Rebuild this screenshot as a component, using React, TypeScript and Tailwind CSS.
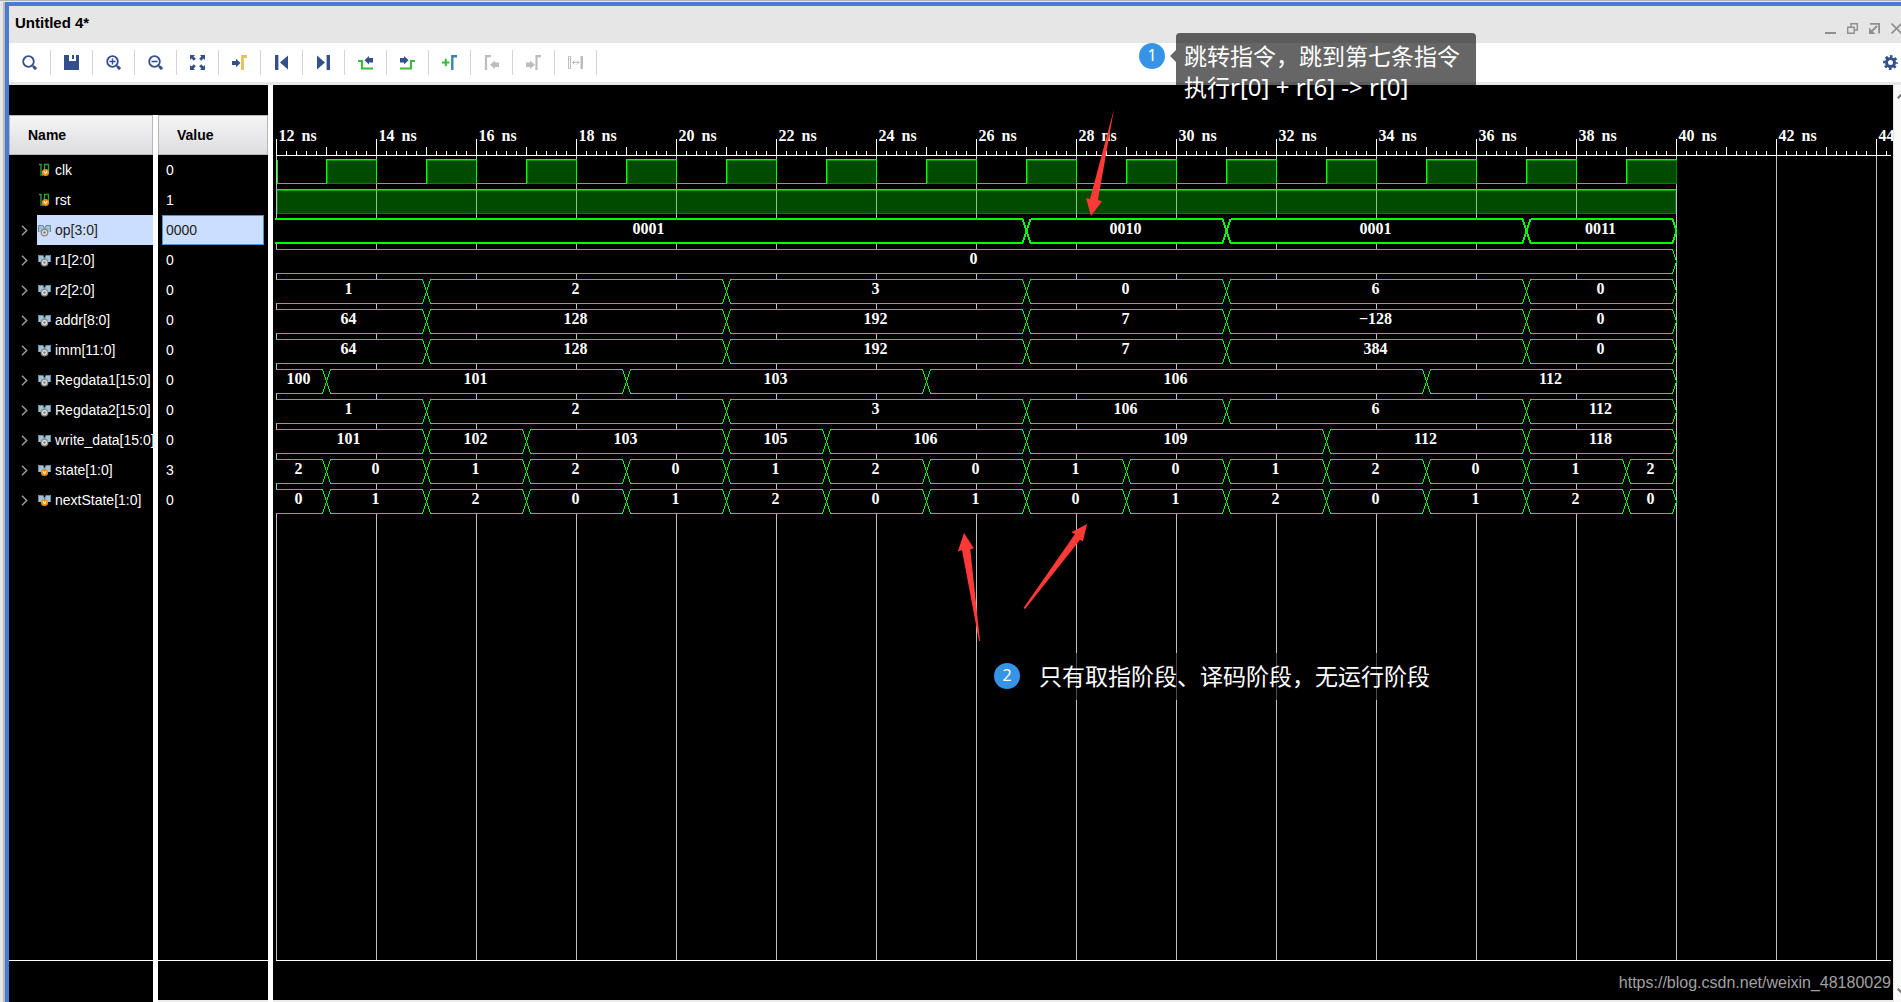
import type { ReactNode } from 'react';

type Segment = [start: number, label: string];

type Signal = {
  name: string;
  value: string;
  kind: 'clock' | 'level' | 'bus';
  internal?: boolean;
  segments?: Segment[];
};

const T_START = 12;
const T_END = 40;
const T_LAST = 44;
const PX_PER_NS = 50;
const ROW = 30;
const AXIS_Y = 70;

const SIGNALS: Signal[] = [
  { name: 'clk', value: '0', kind: 'clock', internal: true },
  { name: 'rst', value: '1', kind: 'level', internal: true },
  { name: 'op[3:0]', value: '0000', kind: 'bus', segments: [[12, '0001'], [27, '0010'], [31, '0001'], [37, '0011']] },
  { name: 'r1[2:0]', value: '0', kind: 'bus', segments: [[12, '0']] },
  { name: 'r2[2:0]', value: '0', kind: 'bus', segments: [[12, '1'], [15, '2'], [21, '3'], [27, '0'], [31, '6'], [37, '0']] },
  { name: 'addr[8:0]', value: '0', kind: 'bus', segments: [[12, '64'], [15, '128'], [21, '192'], [27, '7'], [31, '−128'], [37, '0']] },
  { name: 'imm[11:0]', value: '0', kind: 'bus', segments: [[12, '64'], [15, '128'], [21, '192'], [27, '7'], [31, '384'], [37, '0']] },
  { name: 'Regdata1[15:0]', value: '0', kind: 'bus', segments: [[12, '100'], [13, '101'], [19, '103'], [25, '106'], [35, '112']] },
  { name: 'Regdata2[15:0]', value: '0', kind: 'bus', segments: [[12, '1'], [15, '2'], [21, '3'], [27, '106'], [31, '6'], [37, '112']] },
  {
    name: 'write_data[15:0]', value: '0', kind: 'bus',
    segments: [[12, '101'], [15, '102'], [17, '103'], [21, '105'], [23, '106'], [27, '109'], [33, '112'], [37, '118']],
  },
  {
    name: 'state[1:0]', value: '3', kind: 'bus', internal: true,
    segments: [
      [12, '2'], [13, '0'], [15, '1'], [17, '2'], [19, '0'], [21, '1'], [23, '2'], [25, '0'],
      [27, '1'], [29, '0'], [31, '1'], [33, '2'], [35, '0'], [37, '1'], [39, '2'],
    ],
  },
  {
    name: 'nextState[1:0]', value: '0', kind: 'bus', internal: true,
    segments: [
      [12, '0'], [13, '1'], [15, '2'], [17, '0'], [19, '1'], [21, '2'], [23, '0'], [25, '1'],
      [27, '0'], [29, '1'], [31, '2'], [33, '0'], [35, '1'], [37, '2'], [39, '0'],
    ],
  },
];

const SELECTED = 'op[3:0]';

const NAVY = '#34508a';
const GREEN = '#3fb83f';
const GREY = '#bdbdbd';

const xOf = (t: number) => (t - T_START) * PX_PER_NS + 0.5;

function Icon({ children, size = 15 }: { children: ReactNode; size?: number }) {
  return (
    <svg width={size} height={size} viewBox={`0 0 ${size} ${size}`} fill="none" className="shrink-0">
      {children}
    </svg>
  );
}

function Lens({ children }: { children?: ReactNode }) {
  return (
    <Icon>
      <circle cx="6.5" cy="6.5" r="5.3" stroke={NAVY} strokeWidth="1.8" />
      <path d="M10.5 10.5l1.5 1.5" stroke={NAVY} strokeWidth="1.6" />
      <path d="M11.5 11.5l2.6 2.6" stroke={NAVY} strokeWidth="3" />
      {children}
    </Icon>
  );
}

const TOOLS: { label: string; icon: ReactNode; disabled?: boolean }[] = [
  { label: 'Find', icon: <Lens /> },
  {
    label: 'Save',
    icon: <Icon><path d="M0 0h5v6h7V0h3v15H0zM8 0h2v4H8z" fill={NAVY} /></Icon>,
  },
  { label: 'Zoom in', icon: <Lens><path d="M3.5 6.5h6M6.5 3.5v6" stroke={NAVY} strokeWidth="1.4" /></Lens> },
  { label: 'Zoom out', icon: <Lens><path d="M3.5 6.5h6" stroke={NAVY} strokeWidth="1.6" /></Lens> },
  {
    label: 'Zoom fit',
    icon: (
      <Icon>
        <path d="M0 0h5L3.6 1.5l2.2 2.2-2 2-2.200-2.200L0 5zM15 0v5l-1.600-1.500-2.200 2.200-2-2 2.200-2.200L10 0zM0 15v-5l1.600 1.500 2.200-2.200 2 2-2.200 2.200L5 15zM15 15h-5l1.400-1.500-2.200-2.200 2-2 2.200 2.200L15 10z" fill={NAVY} />
      </Icon>
    ),
  },
  {
    label: 'Go to cursor',
    icon: (
      <Icon>
        <path d="M0 6h4V3.8L8.5 8 4 12.2V10H0z" fill={NAVY} />
        <path d="M10.500 15V1.500H15" stroke="#e3c65b" strokeWidth="3" />
      </Icon>
    ),
  },
  { label: 'Go to start', icon: <Icon><path d="M1 0h3.400v15H1zM14 .5v14L6 7.500z" fill={NAVY} /></Icon> },
  { label: 'Go to end', icon: <Icon><path d="M10.600 0H14v15h-3.400zM1 .5v14l8-7z" fill={NAVY} /></Icon> },
  {
    label: 'Previous transition',
    icon: (
      <Icon>
        <path d="M0 6h4v7.500h11" stroke={GREEN} strokeWidth="2.200" />
        <path d="M15 3v4.500h-4v2L6.500 5.200 11 1v2z" fill={NAVY} />
      </Icon>
    ),
  },
  {
    label: 'Next transition',
    icon: (
      <Icon>
        <path d="M0 13.500h11V6h4" stroke={GREEN} strokeWidth="2.200" />
        <path d="M0 3v4.500h4v2l4.500-4.300L4 1v2z" fill={NAVY} />
      </Icon>
    ),
  },
  {
    label: 'Add marker',
    icon: (
      <Icon>
        <path d="M0 7.500h7.500M3.800 3.800v7.500" stroke={GREEN} strokeWidth="2" />
        <path d="M10.300 15V1.200H15" stroke="#3c82b4" strokeWidth="2.400" />
      </Icon>
    ),
  },
  {
    label: 'Previous marker',
    disabled: true,
    icon: (
      <Icon>
        <path d="M2 15V1.200h5" stroke={GREY} strokeWidth="2.200" />
        <path d="M15 7.500v4.500h-4v2L6 9.700l5-4.200v2z" fill={GREY} />
      </Icon>
    ),
  },
  {
    label: 'Next marker',
    disabled: true,
    icon: (
      <Icon>
        <path d="M10.500 15V1.200H15" stroke={GREY} strokeWidth="2.200" />
        <path d="M0 7.500v4.500h4v2l5-4.300-5-4.200v2z" fill={GREY} />
      </Icon>
    ),
  },
  {
    label: 'Swap cursors',
    disabled: true,
    icon: (
      <Icon>
        <path d="M.5 1.500h2v12h-2z" stroke={GREY} />
        <path d="M12.500 1H15v13h-2.500z" fill={GREY} />
        <path d="M4.500 7.500h6.500M6.500 5.500l-2 2 2 2M9 5.500l2 2-2 2" stroke={GREY} />
      </Icon>
    ),
  },
];

function SignalIcon({ signal }: { signal: Signal }) {
  return (
    <svg width="13" height="14" viewBox="0 0 13 14" fill="none" className="shrink-0">
      {signal.kind === 'bus' ? (
        <>
          <path d="M0 2h5l1.500 3L8 2h5v7H0z" fill="#9cc4da" />
          <path d="M.5 9V2.500H5L6.500 6 8 2.500h4.500V9" stroke="#6f8694" />
        </>
      ) : (
        <path d="M1 1.500h2V12h2M6.500 8V1.500h4V8" stroke="#2f9a3f" strokeWidth="1.400" />
      )}
      {signal.internal ? (
        <>
          <circle cx={signal.kind === 'bus' ? 6.5 : 7.5} cy="9.500" r="3.600" fill="#ef8f1f" />
          <path d={signal.kind === 'bus' ? 'M5 8l1.500 3L8 8' : 'M6 8l1.500 3L9 8'} stroke="#fff" />
        </>
      ) : (
        <>
          <circle cx="6.500" cy="9.500" r="3.200" fill="#e8e8e8" stroke="#8c8c8c" strokeWidth="1.400" />
          <circle cx="6.500" cy="9.500" r="1.200" fill="#777" />
        </>
      )}
    </svg>
  );
}

function SignalTable() {
  return (
    <section className="flex w-[259px] shrink-0 flex-col bg-black">
      <table className="mt-[30px] w-full table-fixed border-separate border-spacing-0 text-sm">
        <colgroup>
          <col className="w-[149px]" />
          <col />
        </colgroup>
        <thead>
          <tr className="h-10 text-left text-black">
            <th className="border-r-[5px] border-white p-0">
              <div className="flex h-10 items-center border border-[#b8b8b8] bg-linear-to-b from-[#f5f5f5] to-[#dddde1] pl-[18px]">Name</div>
            </th>
            <th className="p-0">
              <div className="flex h-10 items-center border border-[#b8b8b8] bg-linear-to-b from-[#f5f5f5] to-[#dddde1] pl-[18px]">Value</div>
            </th>
          </tr>
        </thead>
        <tbody>
          {SIGNALS.map(s => {
            const selected = s.name === SELECTED;
            return (
              <tr key={s.name} className="h-[30px] text-white">
                <td className="overflow-hidden border-r-[5px] border-white p-0">
                  <div className="flex h-[30px] items-center">
                    <div className="flex w-7 shrink-0 justify-center pt-px pl-[3px]">
                      {s.kind === 'bus' && (
                        <button aria-label={`Expand ${s.name}`} className="flex">
                          <svg width="7" height="11" viewBox="0 0 7 11" fill="none" stroke="#9a9a9a" strokeWidth="1.500">
                            <path d="M1 .8l4.700 4.700L1 10.200" />
                          </svg>
                        </button>
                      )}
                    </div>
                    <div className={`flex h-full min-w-0 flex-1 items-center gap-1 overflow-hidden whitespace-nowrap pl-px ${selected ? 'bg-[#cbdeff] text-[#222]' : ''}`}>
                      <SignalIcon signal={s} />
                      {s.name}
                    </div>
                  </div>
                </td>
                <td className="px-1 py-0">
                  <div className={`flex h-[30px] items-center border pl-[3px] ${selected ? 'border-[#4a94d0] bg-[#cbdeff] text-[#222]' : 'border-transparent'}`}>
                    {s.value}
                  </div>
                </td>
              </tr>
            );
          })}
        </tbody>
      </table>
      <div className="flex flex-1">
        <div className="w-36" />
        <div className="w-[5px] bg-white" />
      </div>
      <div className="flex h-[42px]">
        <div className="w-36 border-t border-white" />
        <div className="w-[5px] bg-white" />
        <div className="flex-1 border-t border-b-2 border-t-white border-b-[#ececec]" />
      </div>
    </section>
  );
}

function Ruler() {
  const ticks: ReactNode[] = [];
  // five minor ticks per nanosecond, plus one past the last label
  for (let i = 0; i <= (T_LAST - T_START) * 5 + 1; i++) {
    const x = i * 10 + 0.5;
    const height = i % 10 === 0 ? 16 : i % 5 === 0 ? 8 : 4;
    ticks.push(<path key={i} d={`M${x} ${AXIS_Y - height}V${AXIS_Y}`} />);
  }
  const labels: number[] = [];
  for (let t = T_START; t <= T_LAST; t += 2) labels.push(t);

  return (
    <>
      <g stroke="#fff">{ticks}</g>
      <rect x="0" y={AXIS_Y} width="100%" height="1" fill="#fff" />
      <g fill="#fff">
        {labels.map(t => (
          <g key={t}>
            <text x={xOf(t) + 2} y={AXIS_Y - 14}>{t}</text>
            {t < T_LAST && <text x={xOf(t) + 25} y={AXIS_Y - 14}>ns</text>}
          </g>
        ))}
      </g>
    </>
  );
}

function ClockWave({ top }: { top: number }) {
  const y0 = top + 4.5;
  const y1 = top + 28.5;
  const highs: number[] = [];
  for (let t = T_START + 1; t < T_END; t += 2) highs.push(t);
  return (
    <g>
      <path d={`M1.500 ${y0}V${y1}`} stroke="#00ff00" />
      {highs.map(t => (
        <g key={t}>
          <path d={`M${xOf(t - 1)} ${y1}H${xOf(t)}`} stroke="#00ff00" />
          <rect x={xOf(t)} y={y0} width={PX_PER_NS} height="24" fill="#004b00" stroke="#008000" />
          <path d={`M${xOf(t) + 1} ${y1 - 1}V${y0 + 1}H${xOf(t + 1)}`} stroke="#009600" />
          <path d={`M${xOf(t)} ${y1}V${y0}H${xOf(t + 1)}${t + 1 < T_END ? `V${y1}` : ''}`} stroke="#00ff00" />
        </g>
      ))}
    </g>
  );
}

function LevelWave({ top }: { top: number }) {
  const width = (T_END - T_START) * PX_PER_NS;
  const grid: number[] = [];
  for (let t = T_START + 2; t < T_END; t += 2) grid.push(t);
  return (
    <g>
      <rect x="1.500" y={top + 4.5} width={width - 2} height="24" fill="#004b00" stroke="#008000" />
      <path d={`M1 ${top + 5.5}H${width}`} stroke="#00a800" />
      {grid.map(t => <path key={t} d={`M${xOf(t)} ${top + 5}v24`} stroke="#80c880" />)}
      <path d={`M0 ${top + 4.5}H${width + 1}`} stroke="#00ff00" />
    </g>
  );
}

function BusWave({ top, segments, selected }: { top: number; segments: Segment[]; selected: boolean }) {
  const y0 = selected ? top + 4 : top + 4.5;
  const y1 = selected ? top + 28 : top + 28.5;
  const mid = (y0 + y1) / 2;
  return (
    <g>
      {segments.map(([t, label], i) => {
        const a = xOf(t);
        const b = xOf(i + 1 < segments.length ? segments[i + 1][0] : T_END);
        const left = i === 0 ? '' : `L${a} ${mid}L${a + 4} ${y0}`;
        const from = i === 0 ? (selected ? a - 1.5 : a - 0.5) : a + 4;
        return (
          <g key={t}>
            <path
              d={`M${from} ${y0}H${b - 4}L${b} ${mid}L${b - 4} ${y1}H${from}${left}`}
              fill="#000"
              stroke="#00ff00"
              strokeWidth={selected ? 2 : 1}
            />
            <text x={(i === 0 ? a - 4 + b : a + b) / 2 - 1} y={top + 19} textAnchor="middle" fill="#fff">{label}</text>
          </g>
        );
      })}
    </g>
  );
}

function WavePanel() {
  const grid: number[] = [];
  for (let t = T_START; t <= T_LAST; t += 2) grid.push(t);
  return (
    <section className="flex min-w-0 flex-1 flex-col overflow-hidden border-b-2 border-[#ececec] bg-black">
      <div className="mr-[2px] ml-[3px] flex min-h-[440px] flex-1 border-b border-white">
        <svg
          width="100%"
          height="100%"
          shapeRendering="crispEdges"
          fill="none"
          className="overflow-visible font-['Liberation_Serif',serif] text-base font-bold"
        >
          {grid.map(t => (
            <line key={t} x1={xOf(t)} x2={xOf(t)} y1={AXIS_Y + 1} y2="100%" stroke="#c0c0c0" />
          ))}
          <Ruler />
          {SIGNALS.map((s, i) => {
            const top = AXIS_Y + i * ROW;
            if (s.kind === 'clock') return <ClockWave key={s.name} top={top} />;
            if (s.kind === 'level') return <LevelWave key={s.name} top={top} />;
            return <BusWave key={s.name} top={top} segments={s.segments ?? []} selected={s.name === SELECTED} />;
          })}
        </svg>
      </div>
      <div className="flex h-[39px] items-center justify-end pt-1 pr-[2px]">
        <a href="https://blog.csdn.net/weixin_48180029" className="text-base text-[#a0a0a0]">
          https://blog.csdn.net/weixin_48180029
        </a>
      </div>
    </section>
  );
}

function Badge({ children }: { children: ReactNode }) {
  return (
    <span className="flex size-[26px] shrink-0 justify-center rounded-full bg-[#3793e6] text-base leading-6 text-white">
      {children}
    </span>
  );
}

// Notes pinned on top of the waveform window
function Annotations() {
  return (
    <div className="pointer-events-none font-['Noto_Sans','Noto_Sans_CJK_SC',sans-serif]">
      <svg className="absolute top-0 left-0 h-full w-full" fill="#ff3a36">
        <path d="M1114 108L1098 199l4 1.300L1091 215l-5-18 4 1z" />
        <path d="M980 640L970.300 548.500l3.600-1.200L964 532l-6.200 18.500 4.200-1.500L979 640z" />
        <path d="M1023.500 607L1075 533l-3.600-1.700L1087 523l-4 17.500-2.900-1.700L1025 608z" />
      </svg>
      <div className="absolute top-8 left-[1139px] flex items-start">
        <div className="pt-[10px]"><Badge>1</Badge></div>
        <div className="mt-[17px] ml-[5px] border-y-[6px] border-r-[6px] border-y-transparent border-r-black/60" />
        <p className="w-[300px] rounded-sm bg-black/60 px-2 py-2 text-[23px] leading-[31px] whitespace-nowrap text-white">
          跳转指令，跳到第七条指令
          <br />
          执行<span className="text-2xl leading-none">r[0] + r[6] -&gt; r[0]</span>
        </p>
      </div>
      <div className="absolute top-[652px] left-[994px] flex items-start">
        <div className="pt-[10px]"><Badge>2</Badge></div>
        <p className="ml-[11px] rounded-sm bg-black/60 px-2 py-2 text-[23px] leading-[31px] whitespace-nowrap text-white">
          只有取指阶段、译码阶段，无运行阶段
        </p>
      </div>
    </div>
  );
}

export default function App() {
  return (
    <div className="relative flex h-screen flex-col overflow-hidden border-t border-[#b4b4b4] bg-[#e9e9e9] pt-px font-['Liberation_Sans',Arial,sans-serif]">
      <div className="flex min-h-0 flex-1">
        <div className="w-[3px] bg-[#e6e6e6]" />
        <div className="w-[2px] bg-[#bababa]" />
        <main className="flex min-w-0 flex-1 flex-col border-t-4 border-l-4 border-[#4a7bd0]">
          <header className="flex h-[37px] shrink-0 items-center justify-between bg-[#e6e6e6] pl-1.5">
            <h1 className="pb-0.5 text-[15px] font-bold text-black">Untitled 4*</h1>
            <div className="-mr-px flex gap-[11px] pt-2 text-[#8f8f8f]">
              <button aria-label="Minimize">
                <Icon size={11}><path d="M0 10h11" stroke="currentColor" strokeWidth="2" /></Icon>
              </button>
              <button aria-label="Restore">
                <Icon size={11}><path d="M.7 4.200h6.500v6.100H.7zM4 4V.7h6.300V7H7.500" stroke="currentColor" strokeWidth="1.400" /></Icon>
              </button>
              <button aria-label="Float">
                <Icon size={11}>
                  <path d="M1 .9h9.100V10.500M8 3L3 8" stroke="currentColor" strokeWidth="1.800" />
                  <path d="M0 4.500V11h6.500z" fill="currentColor" />
                </Icon>
              </button>
              <button aria-label="Close">
                <Icon size={11}><path d="M.5.5l10 10M10.500.5l-10 10" stroke="currentColor" strokeWidth="1.600" /></Icon>
              </button>
            </div>
          </header>

          <nav className="flex h-[42px] shrink-0 items-center border-b-[3px] border-[#e6e6e6] bg-white">
            {TOOLS.map(tool => (
              <button
                key={tool.label}
                aria-label={tool.label}
                disabled={tool.disabled}
                className="flex h-[25px] w-[42px] items-center justify-center border-r border-[#d4d4d4]"
              >
                {tool.icon}
              </button>
            ))}
            <button aria-label="Settings" className="mr-[3px] ml-auto">
              <Icon>
                <circle cx="7.500" cy="7.500" r="4" stroke={NAVY} strokeWidth="3" />
                <circle cx="7.500" cy="7.500" r="6.200" stroke={NAVY} strokeWidth="2.400" strokeDasharray="2.600 2.270" strokeDashoffset="1.300" />
              </Icon>
            </button>
          </nav>

          <div className="flex min-h-0 flex-1">
            <SignalTable />
            <div className="w-[5px] shrink-0 bg-white" />
            <WavePanel />
            <div className="flex w-2 shrink-0 flex-col justify-between overflow-hidden border-l border-[#e4e4e4] bg-[#fafafa] pt-2 pb-2 pl-[3px]">
              <svg width="10" height="6" viewBox="0 0 10 6" fill="none" stroke="#777" strokeWidth="2" className="shrink-0">
                <path d="M.7 5.300L5 1l4.300 4.300" />
              </svg>
              <svg width="10" height="6" viewBox="0 0 10 6" fill="none" stroke="#777" strokeWidth="2" className="shrink-0">
                <path d="M.7.7L5 5 9.300.7" />
              </svg>
            </div>
          </div>
        </main>
      </div>
      <Annotations />
    </div>
  );
}
